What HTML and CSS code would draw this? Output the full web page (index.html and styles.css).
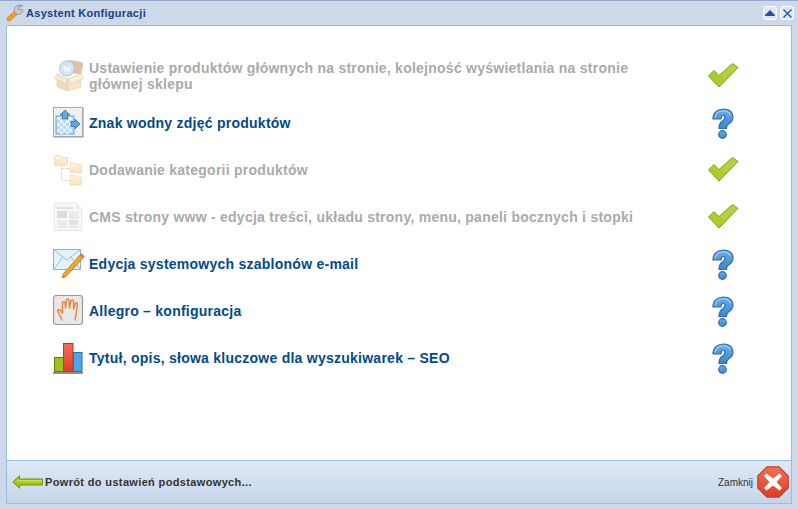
FILE: index.html
```html
<!DOCTYPE html>
<html lang="pl">
<head>
<meta charset="utf-8">
<title>Asystent Konfiguracji</title>
<link rel="stylesheet" href="styles.css">
</head>
<body>
<svg class="defs" width="0" height="0" aria-hidden="true">
  <defs>
    <linearGradient id="qg" x1="0" y1="0" x2="0" y2="1"><stop offset="0" stop-color="#6aaee6"/><stop offset="1" stop-color="#3d86cc"/></linearGradient>
    <linearGradient id="fg" x1="0" y1="0" x2="0" y2="1"><stop offset="0" stop-color="#fdf3df"/><stop offset="1" stop-color="#f9e3bd"/></linearGradient>
    <linearGradient id="rg" x1="0" y1="0" x2="0" y2="1"><stop offset="0" stop-color="#f07058"/><stop offset="1" stop-color="#e03c22"/></linearGradient>
    <symbol id="check" viewBox="0 0 32 26">
      <path d="M1.500 14 L7 8.500 L12 13.500 L25.500 1.500 L31 5.500 L12 25 Z" fill="#a9ce2a" stroke="#7fa32a" stroke-width="1" stroke-linejoin="round"/>
      <path d="M13 14 L25.500 2.500 L30 5.500 L18 17 Z" fill="#b8cf3e"/>
    </symbol>
    <symbol id="quest" viewBox="0 0 22 31">
      <path d="M1 11 C1 4 6 1 11.500 1 C17.500 1 21 4.500 21 9 C21 12.500 19 14.500 16.500 16 C15 17 14.500 18 14.500 20.500 L7 20.500 C7 16.500 8 14.500 10.500 13 C12.500 11.500 13 10.500 13 9.500 C13 8 12.500 7.500 11 7.500 C9.500 7.500 9 8.500 9 11 Z" fill="url(#qg)" stroke="#2a6cb2" stroke-width="1.200" stroke-linejoin="round"/>
      <circle cx="10.500" cy="26.500" r="3.800" fill="url(#qg)" stroke="#2a6cb2" stroke-width="1.200"/>
      <path d="M3 9.500 C3.500 5 7 3 11.500 3 C15 3 17.500 4.500 18.500 7" fill="none" stroke="#a9d2f3" stroke-width="1.200"/>
    </symbol>
  </defs>
</svg>
<main class="window">
  <header class="titlebar">
    <svg class="title-icon" width="18" height="18" viewBox="0 0 18 18" aria-hidden="true">
      <path d="M1.500 13.500 L8.500 7 L11.500 10 L4.500 16.500 Q2.500 17.500 1.500 16.500 Q.8 15 1.500 13.500Z" fill="#f39a22" stroke="#c87820" stroke-width=".6"/>
      <path d="M8.500 8 C7.500 3 10.500 .5 15.500 1 L16.500 2 L12.500 3 L12.500 5.500 L16.500 5.500 L17 6.500 C16 10 13.500 11 10.500 10 Z" fill="#c6c9cd" stroke="#7f8490" stroke-width=".7"/>
    </svg>
    <h1 class="title">Asystent Konfiguracji</h1>
    <div class="win-buttons">
      <span class="win-btn">
        <svg width="10" height="6" viewBox="0 0 10 6"><path d="M5 0 L10 5 V6 H0 V5Z" fill="#2b4f9e"/></svg>
      </span>
      <span class="win-btn">
        <svg width="9" height="9" viewBox="0 0 9 9"><path d="M.5 .5 L8.500 8.500 M8.500 .5 L.5 8.500" stroke="#2b4f9e" stroke-width="1.300"/></svg>
      </span>
    </div>
  </header>

  <section class="content">
    <ul class="steps">
      <li class="step done">
        <svg class="step-icon" width="32" height="34" viewBox="0 0 32 34" aria-hidden="true">
          <path d="M14 1 L24 2 L30 4 L28 15 L14 14Z" fill="#c4cbb8"/>
          <path d="M23 2 L30 4 L28 15 L21 14Z" fill="#e5bfa0"/>
          <circle cx="14" cy="9.500" r="7.500" fill="#d3e4f3" stroke="#aac6e0"/>
          <text x="14" y="13" class="wp">W</text>
          <path d="M4 15 L15 20 L15 32 L4 28Z" fill="#ecdcbd" stroke="#e0cfae" stroke-width=".6"/>
          <path d="M15 20 L28 15 L28 28 L15 32Z" fill="#f3e5c9" stroke="#e0cfae" stroke-width=".6"/>
          <path d="M4 15 L1 19 L12.500 24.500 L15 20Z" fill="#f6ecd6" stroke="#e0cfae" stroke-width=".6"/>
          <path d="M28 15 L31 19 L18 24.500 L15 20Z" fill="#f8f0de" stroke="#e0cfae" stroke-width=".6"/>
        </svg>
        <a class="step-label">Ustawienie produktów głównych na stronie, kolejność wyświetlania na stronie głównej sklepu</a>
        <svg class="status check" width="32" height="26" aria-hidden="true"><use href="#check"/></svg>
      </li>
      <li class="step">
        <svg class="step-icon" width="32" height="32" viewBox="0 0 32 32" aria-hidden="true">
          <rect x=".5" y=".5" width="29" height="29" fill="#f0f0f0" stroke="#a8a8a8"/>
          <path d="M1 30.500 H30.500 V1" fill="none" stroke="#c8c8c8"/>
          <rect x="3" y="9" width="18" height="18" fill="#b9daf6" stroke="#6aa5d9"/>
          <path d="M4 10h3v3H4zM10 10h3v3h-3zM16 10h3v3h-3zM7 13h3v3H7zM13 13h3v3h-3zM4 16h3v3H4zM10 16h3v3h-3zM16 16h3v3h-3zM7 19h3v3H7zM13 19h3v3h-3zM4 22h3v3H4zM10 22h3v3h-3zM16 22h3v3h-3zM7 25h3v2H7zM13 25h3v2h-3z" fill="#e7f3fd"/>
          <path d="M12 3 L17 8 H14.500 V12 H9.500 V8 H7Z" fill="#63a6de" stroke="#2d6fb2" stroke-width=".8"/>
          <path d="M27 17 L22 12 V14.500 H18 V19.500 H22 V22Z" fill="#63a6de" stroke="#2d6fb2" stroke-width=".8"/>
        </svg>
        <a class="step-label">Znak wodny zdjęć produktów</a>
        <svg class="status quest" width="22" height="31" aria-hidden="true"><use href="#quest"/></svg>
      </li>
      <li class="step done">
        <svg class="step-icon" width="32" height="32" viewBox="0 0 32 32" aria-hidden="true">
          <path d="M8.500 12 V26.500 H17 M8.500 14.500 H17" fill="none" stroke="#e0e0e0"/>
          <path d="M1.500 1.500 H7 L9 3.500 H14.500 V11.500 H1.500Z" fill="url(#fg)" stroke="#f3dfb9"/>
          <path d="M17 8.500 H21 L22 10 H28.500 V18.500 H17Z" fill="url(#fg)" stroke="#f3dfb9"/>
          <path d="M17 21.500 H21 L22 23 H28.500 V31 H17Z" fill="url(#fg)" stroke="#f3dfb9"/>
        </svg>
        <a class="step-label">Dodawanie kategorii produktów</a>
        <svg class="status check" width="32" height="26" aria-hidden="true"><use href="#check"/></svg>
      </li>
      <li class="step done">
        <svg class="step-icon" width="32" height="32" viewBox="0 0 32 32" aria-hidden="true">
          <path d="M1.500 2 H23 L28.500 8 V29.500 H1.500Z" fill="#f7f7f7" stroke="#e6e6e6"/>
          <path d="M23 2 V8 H28.500Z" fill="#ececec"/>
          <rect x="4" y="6" width="16" height="2" fill="#dedede"/>
          <rect x="4" y="10" width="10" height="7" fill="#dcdcdc"/>
          <path d="M16 11h10M16 13h10M16 15h10M16 17h10M4 20h10M4 22h10M4 24h10M4 26h10M16 24h10M16 26h10" stroke="#dfdfdf"/>
          <rect x="16" y="19" width="9" height="4" fill="#e2e2e2"/>
        </svg>
        <a class="step-label">CMS strony www - edycja treści, układu strony, menu, paneli bocznych i stopki</a>
        <svg class="status check" width="32" height="26" aria-hidden="true"><use href="#check"/></svg>
      </li>
      <li class="step">
        <svg class="step-icon" width="32" height="30" viewBox="0 0 32 30" aria-hidden="true">
          <rect x=".5" y=".5" width="27" height="20" fill="#e4f2fc" stroke="#7fb6de"/>
          <path d="M1 1 L14 11 L27 1 M1 20 L10 8 M27 20 L18 8" fill="none" stroke="#8ec0e4"/>
          <path d="M10.500 24.500 L9 29 L13 27.500 L30 9 L27 6Z" fill="#f5a623" stroke="#b8701a" stroke-width=".8"/>
          <path d="M27 6 L28.500 4.500 L31.500 7.500 L30 9Z" fill="#dc7ca8" stroke="#a85a80" stroke-width=".6"/>
        </svg>
        <a class="step-label">Edycja systemowych szablonów e-mail</a>
        <svg class="status quest" width="22" height="31" aria-hidden="true"><use href="#quest"/></svg>
      </li>
      <li class="step">
        <svg class="step-icon" width="32" height="32" viewBox="0 0 32 32" aria-hidden="true">
          <rect x=".5" y=".5" width="29" height="29" rx="3" fill="#e8e8e8" stroke="#9a9a9a" stroke-width="1.200"/>
          <path d="M9 25 L4.500 15.500 Q6 14 7.500 15.500 L9.500 18 L9.500 7.500 Q11 6 12 7.500 L12.500 13 L13.500 4.500 Q15 3.500 16 4.500 L16.500 13 L18 5.500 Q19.500 4.500 20.500 6 L20.500 14 L22.500 8 Q24 7.500 24.500 9 L23 20 L22 25" fill="none" stroke="#f0813a" stroke-width="1.400" stroke-linejoin="round" stroke-linecap="round"/>
        </svg>
        <a class="step-label">Allegro – konfiguracja</a>
        <svg class="status quest" width="22" height="31" aria-hidden="true"><use href="#quest"/></svg>
      </li>
      <li class="step">
        <svg class="step-icon" width="32" height="32" viewBox="0 0 32 32" aria-hidden="true">
          <rect x="1.500" y="15.500" width="9" height="14" fill="#9cc414" stroke="#5f7d10"/>
          <rect x="10.500" y="1.500" width="9.500" height="28" fill="url(#rg)" stroke="#a8402a"/>
          <rect x="20.500" y="10.500" width="8.500" height="19" fill="#4aa6e6" stroke="#2a75b0"/>
          <rect x="0" y="30" width="30" height="2" fill="#8f8f8f"/>
        </svg>
        <a class="step-label">Tytuł, opis, słowa kluczowe dla wyszukiwarek – SEO</a>
        <svg class="status quest" width="22" height="31" aria-hidden="true"><use href="#quest"/></svg>
      </li>
    </ul>
  </section>

  <footer class="footer">
    <a class="back">
      <svg width="32" height="14" viewBox="0 0 32 14" aria-hidden="true">
        <path d="M.8 7 L7.500 .8 V4 H30.500 V10 H7.500 V13.200Z" fill="#9ecb12" stroke="#6d9310" stroke-width="1"/>
        <path d="M3 7 L7 4.500 V5 H30 V6.500 H6Z" fill="#c4e24c"/>
      </svg>
      <span>Powrót do ustawień podstawowych...</span>
    </a>
    <a class="close">
      <span>Zamknij</span>
      <svg width="32" height="32" viewBox="0 0 32 32" aria-hidden="true">
        <path d="M10 .8 H22 L31.200 10 V22 L22 31.200 H10 L.8 22 V10Z" fill="url(#rg)" stroke="#c0422c" stroke-width="1.200"/>
        <path d="M9.500 7.500 L16 12.500 L22.500 7.500 L25 10 L19.500 16 L25 22 L22.500 24.500 L16 19.500 L9.500 24.500 L7 22 L12.500 16 L7 10Z" fill="#fff"/>
      </svg>
    </a>
  </footer>
</main>
</body>
</html>
```
FILE: styles.css
```css
* { box-sizing: border-box; }
html, body { margin: 0; height: 100%; }
body { background: #e8ecf1; font-family: "Liberation Sans", Arial, sans-serif; overflow: hidden; }
.defs { position: absolute; }
.window {
  width: 798px;
  height: 509px;
  display: flex;
  flex-direction: column;
  background: #cdd9e9;
  border-top: 1px solid #94a8cb;
  padding: 0 6px 5px;
}
.titlebar {
  height: 24px;
  display: flex;
  align-items: center;
  margin: 0 -1px 0 0;
  flex: none;
}
.title-icon { flex: none; margin-right: 2px; }
.title { margin: 0; font-size: 11px; font-weight: bold; color: #15428b; flex: 1; letter-spacing: .3px; }
.win-buttons { display: flex; gap: 3px; margin-right: -1px; }
.win-btn {
  width: 14px;
  height: 14px;
  background: #dfe8f6;
  border: 1px solid #fff;
  border-radius: 3px;
  display: flex;
  align-items: center;
  justify-content: center;
}
.content {
  flex: 1;
  background: #fff;
  border: 1px solid #99bbe8;
  min-height: 0;
  padding: 26px 0 0 46px;
}
.steps { list-style: none; margin: 0; padding: 0; }
.step {
  display: flex;
  align-items: center;
  height: 47px;
}
.step-icon { flex: none; margin-right: 4px; width: 32px; }
.step-label {
  width: 560px;
  font-size: 14px;
  line-height: 16px;
  font-weight: bold;
  letter-spacing: .25px;
  color: #004a8f;
}
.done .step-label { color: #aaa; }
.status { flex: none; }
.check { margin-left: 58px; margin-bottom: 2px; }
.quest { margin-left: 63px; margin-top: 2px; }
.wp { font-size: 9px; font-family: "Liberation Serif", serif; fill: #fff; text-anchor: middle; font-weight: bold; }
.footer {
  flex: none;
  height: 43px;
  background: linear-gradient(#dfe8f5, #c5d6ea);
  border: 1px solid #99bbe8;
  border-top: 0;
  display: flex;
  align-items: center;
  justify-content: space-between;
  padding: 0 2px 0 5px;
}
.back { display: flex; align-items: center; gap: 1px; font-size: 11px; font-weight: bold; letter-spacing: .35px; color: #333; }
.close { display: flex; align-items: center; gap: 4px; font-size: 10px; color: #333; }
```
